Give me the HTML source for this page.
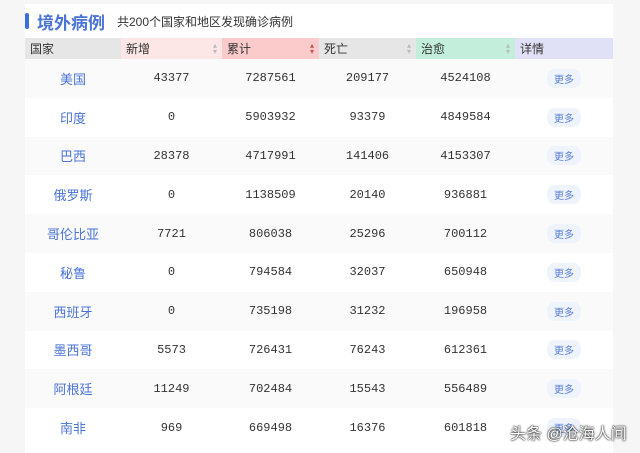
<!DOCTYPE html><html><head><style>
body{margin:0;width:640px;height:453px;background:#f6f6f6;font-family:"Liberation Sans","Noto Sans CJK SC",sans-serif;overflow:hidden;position:relative}
.box{position:absolute;left:25px;top:4px;width:588px;height:449px;background:#fff}
.title{position:absolute;left:25px;top:10px;height:22px;display:flex;align-items:center}
.bar{width:4px;height:16px;background:#3b6fd8;border-radius:2px;margin-right:8px}
.t{color:#4a74d6;font-size:17px;margin-right:12px;font-weight:bold}
.s{font-size:12px;color:#333}
table{position:absolute;left:25px;top:38px;width:588px;border-collapse:collapse;font-size:12px;color:#333;table-layout:fixed}
th{height:21px;text-align:left;font-weight:normal;padding:0 0 0 5px;position:relative}
th span{position:absolute;right:5px;top:5px;color:#bbb;font-size:8px;line-height:6px}
td{height:38.8px;text-align:center;padding:0;font-family:"Liberation Mono","Noto Sans CJK SC",monospace}
td.c{color:#4a74d6;font-family:"Liberation Sans","Noto Sans CJK SC",sans-serif;font-size:13px}
tr:nth-child(odd) td{background:#fafafa}
.m{display:inline-block;background:#eef3fc;color:#5b7fd6;font-size:10px;padding:2px 7px;border-radius:8px;font-family:"Noto Sans CJK SC",sans-serif}
.wm{position:absolute;left:510px;top:420px;color:#fff;font-size:16px;text-shadow:0 0 2px #000,0 0 1px #000}
</style></head><body>
<div class="box"></div>
<div class="title"><div class="bar"></div><span class="t">境外病例</span><span class="s">共200个国家和地区发现确诊病例</span></div>
<table>
<colgroup><col style="width:96px"><col style="width:101px"><col style="width:97px"><col style="width:97px"><col style="width:99px"><col style="width:98px"></colgroup>
<thead><tr>
<th style="background:#e6e6e6">国家</th>
<th style="background:#fde6e6">新增<span>▴<br>▾</span></th>
<th style="background:#fbcaca">累计<span style="color:#c55">▴<br>▾</span></th>
<th style="background:#e6e6e6">死亡<span>▴<br>▾</span></th>
<th style="background:#c3eedc">治愈<span>▴<br>▾</span></th>
<th style="background:#e0e0f6">详情</th></tr></thead>
<tbody>
<tr><td class="c">美国</td><td>43377</td><td>7287561</td><td>209177</td><td>4524108</td><td><span class="m">更多</span></td></tr>
<tr><td class="c">印度</td><td>0</td><td>5903932</td><td>93379</td><td>4849584</td><td><span class="m">更多</span></td></tr>
<tr><td class="c">巴西</td><td>28378</td><td>4717991</td><td>141406</td><td>4153307</td><td><span class="m">更多</span></td></tr>
<tr><td class="c">俄罗斯</td><td>0</td><td>1138509</td><td>20140</td><td>936881</td><td><span class="m">更多</span></td></tr>
<tr><td class="c">哥伦比亚</td><td>7721</td><td>806038</td><td>25296</td><td>700112</td><td><span class="m">更多</span></td></tr>
<tr><td class="c">秘鲁</td><td>0</td><td>794584</td><td>32037</td><td>650948</td><td><span class="m">更多</span></td></tr>
<tr><td class="c">西班牙</td><td>0</td><td>735198</td><td>31232</td><td>196958</td><td><span class="m">更多</span></td></tr>
<tr><td class="c">墨西哥</td><td>5573</td><td>726431</td><td>76243</td><td>612361</td><td><span class="m">更多</span></td></tr>
<tr><td class="c">阿根廷</td><td>11249</td><td>702484</td><td>15543</td><td>556489</td><td><span class="m">更多</span></td></tr>
<tr><td class="c">南非</td><td>969</td><td>669498</td><td>16376</td><td>601818</td><td><span class="m">更多</span></td></tr>
</tbody></table>
<div class="wm">头条 @沧海人间</div>
</body></html>
